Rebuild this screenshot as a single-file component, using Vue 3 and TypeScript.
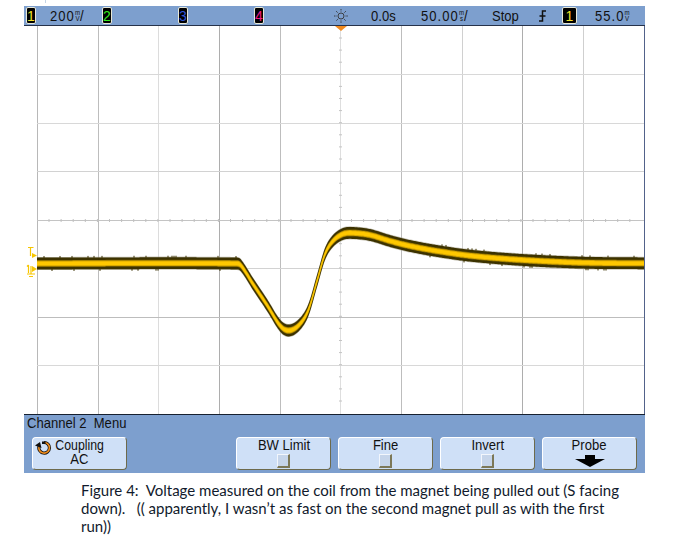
<script setup lang="ts">
import { computed } from 'vue';

// svg canvas starts at page x=24, y=25
const OX = 24;
const OY = 25;

const vLines = [
  { x: 37, c: '#b8b8b8' }, { x: 98, c: '#bdbdbd' }, { x: 158, c: '#dcdcdc' },
  { x: 219, c: '#adadad' }, { x: 280, c: '#bdbdbd' }, { x: 340, c: '#dedede' },
  { x: 401, c: '#bdbdbd' }, { x: 462, c: '#d0d0d0' }, { x: 522, c: '#adadad' },
  { x: 583, c: '#cfcfcf' },
];
const hLines = [
  { y: 73, c: '#d8d8d8' }, { y: 122, c: '#d8d8d8' }, { y: 170, c: '#d2d2d2' },
  { y: 219, c: '#c4c4c4' }, { y: 267, c: '#d2d2d2' }, { y: 316, c: '#bdbdbd' },
  { y: 364, c: '#d8d8d8' },
];

// trace centre read off the screenshot
const knots: [number, number][] = [
  [37, 262.5], [236, 262.5], [241, 264.5], [253, 283], [267, 304], [280, 324.5], [288, 329.5],
  [298, 325], [308, 310], [317, 280], [325, 253], [333, 240], [343, 233], [353, 232],
  [370, 234], [390, 240], [410, 245], [440, 250.5], [473, 255], [523, 259], [583, 261.7],
  [644, 262.3],
];

function centre(x: number): number {
  let i = 0;
  while (i < knots.length - 2 && knots[i + 1][0] < x) i++;
  const [x0, y0] = knots[i];
  const [x1, y1] = knots[i + 1];
  const prev = knots[Math.max(i - 1, 0)];
  const next = knots[Math.min(i + 2, knots.length - 1)];
  const m0 = (y1 - prev[1]) / (x1 - prev[0]);
  const m1 = (next[1] - y0) / (next[0] - x0);
  const h = x1 - x0;
  const t = (x - x0) / h;
  const t2 = t * t;
  const t3 = t2 * t;
  return (2 * t3 - 3 * t2 + 1) * y0 + (t3 - 2 * t2 + t) * h * m0 + (-2 * t3 + 3 * t2) * y1 + (t3 - t2) * h * m1;
}

function band(half: number): string {
  const top: string[] = [];
  const bottom: string[] = [];
  for (let x = 37; x <= 644; x++) {
    const y = centre(x);
    top.push(`${x - OX},${(y - half - OY).toFixed(1)}`);
    bottom.unshift(`${x - OX},${(y + half - OY).toFixed(1)}`);
  }
  return [...top, ...bottom].join(' ');
}

const edgeBand = computed(() => band(6.6));
const darkBand = computed(() => band(5.9));
const brownBand = computed(() => band(3.5));
const midBand = computed(() => band(2.8));
const coreBand = computed(() => band(1.8));

// small noise spikes on the flat parts of the trace
const spikes = computed(() => {
  const out: { x: number; y1: number; y2: number }[] = [];
  let seed = 17;
  for (let x = 38; x < 644; x += 2) {
    if (x > 240 && x < 430) continue;
    seed = (seed * 137 + 59) % 1009;
    if (seed % 4 !== 0) continue;
    const up = seed % 8 === 0;
    const y = centre(x) + (up ? -5.5 : 5.5);
    out.push({ x: x - OX, y1: y - OY, y2: y - OY + (up ? -2 : 2) });
  }
  return out;
});

const xTicks = computed(() => {
  const out: number[] = [];
  for (let x = 49; x < 640; x += 12.1) out.push(x - OX);
  return out;
});
const yTicks = computed(() => {
  const out: number[] = [];
  for (let y = 37; y < 410; y += 12.1) out.push(y - OY);
  return out;
});

const softKeys = [
  { label: 'BW Limit', kind: 'check' },
  { label: 'Fine', kind: 'check' },
  { label: 'Invert', kind: 'check' },
  { label: 'Probe', kind: 'arrow' },
];
</script>

<template>
  <div class="page">
    <div class="top-margin"><span class="speck"></span></div>
    <div class="scope">
      <!-- status line -->
      <header class="status">
        <span class="chan chan--1">1</span>
        <span class="val val--num">200<span class="unit"><i>m</i><i>V</i></span>/</span>
        <span class="chan chan--2">2</span>
        <span class="chan chan--3">3</span>
        <span class="chan chan--4">4</span>
        <svg class="sun" width="14" height="14" viewBox="0 0 14 14">
          <circle cx="7" cy="7" r="3" fill="none" stroke="#333" stroke-width="0.9" />
          <path
            d="M7 0v2.5M7 11.5V14M0 7h2.5M11.5 7H14M2 2l1.8 1.8M10.2 10.2 12 12M12 2l-1.8 1.8M3.8 10.2 2 12"
            stroke="#333"
            stroke-width="0.9"
            stroke-dasharray="1.2 0.5"
          />
        </svg>
        <span class="val">0.0s</span>
        <span class="val val--num">50.00<span class="unit"><i>m</i><i>s</i></span>/</span>
        <span class="val">Stop</span>
        <svg class="slope" width="9" height="12" viewBox="0 0 9 12">
          <path d="M1 11h3.500V1H8M1.500 6h6" fill="none" stroke="#111" stroke-width="1.500" />
        </svg>
        <span class="chan chan--t">1</span>
        <span class="val val--num">55.0<span class="unit"><i>m</i><i>V</i></span></span>
      </header>

      <!-- graticule and trace -->
      <div class="plot">
        <svg class="plot__svg" width="621" height="388" viewBox="0 0 621 388">
          <line v-for="l in vLines" :key="l.x" :x1="l.x - OX + 0.5" :x2="l.x - OX + 0.5" y1="0" y2="388" :stroke="l.c" />
          <line v-for="l in hLines" :key="l.y" x1="13" x2="620" :y1="l.y - OY + 0.5" :y2="l.y - OY + 0.5" :stroke="l.c" />
          <line v-for="x in xTicks" :key="'x' + x" :x1="x" :x2="x" y1="193" y2="196" stroke="#c0c0c0" />
          <line v-for="y in yTicks" :key="'y' + y" x1="315" x2="318" :y1="y" :y2="y" stroke="#c4c4c4" />

          <polygon :points="edgeBand" fill="#8f8a70" opacity="0.5" />
          <polygon :points="darkBand" fill="#3c3200" />
          <polygon :points="brownBand" fill="#7a6200" />
          <polygon :points="midBand" fill="#d8a800" />
          <polygon :points="coreBand" fill="#ffc800" />
          <line v-for="s in spikes" :key="s.x" :x1="s.x" :x2="s.x" :y1="s.y1" :y2="s.y2" stroke="#3c3200" />

          <!-- trigger level and ground markers -->
          <g fill="none" stroke="#f7c600" stroke-width="1.2">
            <path d="M4 221.500h5.500M6.500 221.500V230" />
            <path d="M4.500 239v8M3 240.500 4.500 239" />
            <path d="M7 240v8M3 248h8M5 250.500h4" />
          </g>
          <path d="M8 227l5 2.500-5 2.500z" fill="#f7c600" />
          <path d="M8 240l5 3-5 3z" fill="#f7c600" />

          <path d="M311 0h12l-6 5z" fill="#f28a1e" />
        </svg>
      </div>

      <!-- softkey menu -->
      <footer class="menu">
        <div class="menu__title"><span class="narrow">Channel 2&nbsp; Menu</span></div>
        <div class="keys">
          <div class="key">
            <svg class="key__cycle" width="18" height="15" viewBox="0 0 18 15">
              <path d="M9 2.500a5.300 5.300 0 1 1-5 4" fill="none" stroke="#111" stroke-width="3.200" />
              <path d="M9 2.500a5.300 5.300 0 1 1-5 4" fill="none" stroke="#f08c1a" stroke-width="1.600" />
              <path d="M0 5.500 5 2l1.500 6z" fill="#111" />
              <path d="M7 1.500h3.500V4H7z" fill="#111" />
            </svg>
            <span class="key__label narrow narrow--tight">Coupling</span>
            <span class="key__value narrow">AC</span>
          </div>
          <div class="key-gap"></div>
          <div v-for="k in softKeys" :key="k.label" class="key">
            <span class="key__label narrow">{{ k.label }}</span>
            <span v-if="k.kind === 'check'" class="key__check"></span>
            <svg v-else class="key__arrow" width="30" height="12" viewBox="0 0 30 12">
              <path d="M10 0h10v4h10L15 12 0 4h10z" fill="#000" />
            </svg>
          </div>
        </div>
      </footer>
    </div>

    <p class="caption">
      Figure 4:&nbsp; Voltage measured on the coil from the magnet being pulled out (S facing<br />
      down).&nbsp;&nbsp; (( apparently, I wasn’t as fast on the second magnet pull as with the first<br />
      run))
    </p>
  </div>
</template>

<style scoped>
.page {
  width: 692px;
  height: 546px;
  background: #ffffff;
  overflow: hidden;
}

.top-margin {
  height: 6px;
  padding-left: 45px;
}

.speck {
  display: block;
  width: 1px;
  height: 3px;
  background: #c4d4e6;
}

.scope {
  width: 621px;
  margin-left: 24px;
  font-family: 'Liberation Sans', sans-serif;
  color: #111111;
}

/* Status line */
.status {
  display: grid;
  grid-template-columns: 24px 52px 76px 76px 80px 37px 50px 71px 46px 24px 33px 50px;
  align-items: center;
  height: 19px;
  padding-left: 2px;
  background: #7d9fce;
  border-bottom: 1px solid #26324a;
  font-size: 15px;
}

.chan {
  height: 17px;
  width: 10px;
  background: #000000;
  border: 1px solid #e8e8d8;
  border-radius: 2px;
  box-sizing: border-box;
  text-align: center;
  line-height: 16px;
  font-size: 14px;
}

.chan--1 { color: #f2e22a; }
.chan--2 { color: #35e81c; }
.chan--3 { color: #2f55d8; }
.chan--4 { color: #ee1a86; }

.chan--t {
  width: 15px;
  color: #f2e22a;
}

.val {
  display: inline-flex;
  align-items: center;
  white-space: nowrap;
  transform: scaleX(0.87);
  transform-origin: left center;
}

/* digits sit wider apart than the letters on the scope */
.val--num {
  letter-spacing: 1.2px;
}

.unit {
  display: inline-flex;
  flex-direction: column;
  font-size: 7px;
  line-height: 6px;
  letter-spacing: 0;
  text-align: center;
}

.unit i {
  font-style: normal;
}

/* the scope's own font is a condensed one */
.narrow {
  display: inline-block;
  white-space: nowrap;
  transform: scaleX(0.87);
}

.narrow--tight {
  transform: scaleX(0.82);
}

/* Plot */
.plot {
  height: 388px;
  width: 621px;
  box-sizing: border-box;
  background: #ffffff;
  border-right: 1px solid #52628a;
}

.plot__svg {
  display: block;
}

/* Menu */
.menu {
  height: 59px;
  box-sizing: border-box;
  background: #7d9fce;
  border-top: 1px solid #16202f;
  padding: 0 8px 0 3px;
}

.menu__title {
  height: 22px;
  font-size: 15px;
  line-height: 15px;
}

.menu__title .narrow {
  transform-origin: left center;
}

.keys {
  display: grid;
  grid-template-columns: repeat(6, 95px);
  column-gap: 7px;
  margin-left: 5px;
}

.key {
  position: relative;
  height: 33px;
  box-sizing: border-box;
  display: flex;
  flex-direction: column;
  align-items: center;
  background: #cfe0f7;
  border: 1px solid #ffffff;
  border-right-color: #6d6a4c;
  border-bottom-color: #6d6a4c;
  border-radius: 4px;
  font-size: 15px;
  line-height: 14px;
}

.key__label {
  height: 14px;
}

.key__value {
  height: 14px;
  line-height: 14px;
}

.key__cycle {
  position: absolute;
  left: 2px;
  top: 2px;
}

.key__check {
  width: 13px;
  height: 14px;
  margin-top: 2px;
  box-sizing: border-box;
  background: #c6d5ea;
  border: 1px solid #f2f6fc;
  border-right: 2px solid #7c7858;
  border-bottom: 2px solid #7c7858;
}

.key__arrow {
  margin-top: 3px;
}

/* Caption */
.caption {
  margin: 8px 0 0 81px;
  font-family: Lato, 'Open Sans', sans-serif;
  font-size: 15px;
  line-height: 18px;
  color: #111a2c;
  white-space: nowrap;
}
</style>
